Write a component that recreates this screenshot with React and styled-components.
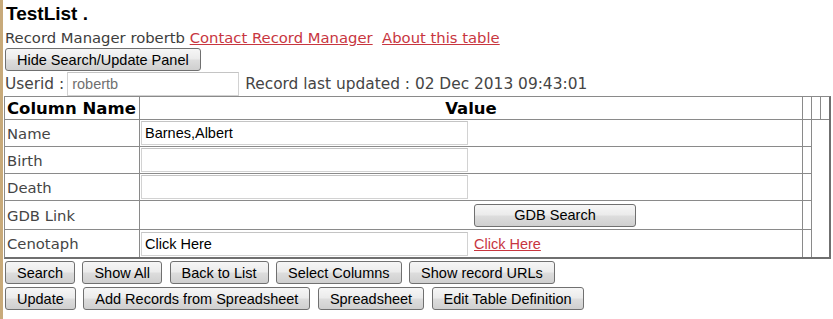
import React from "react";
import styled, { createGlobalStyle } from "styled-components";

const GlobalStyle = createGlobalStyle`
  html, body { margin: 0; padding: 0; background: #fff; }
  body { font-family: "DejaVu Sans", Verdana, sans-serif; }
`;

const LINE = "#8a8a8a";
const EDGE = "#6f6f6f";

const Page = styled.div`
  min-height: 319px;
  box-sizing: border-box;
  border-left: 3px solid #c8aa7a;
  padding-left: 2px;
`;

const Title = styled.h1`
  margin: 0;
  padding: 2px 0 2px 1px;
  font: bold 19px/24px "Liberation Sans", Arial, sans-serif;
  color: #000;
`;

const InfoLine = styled.div`
  font-size: 14.8px;
  line-height: 19px;
  color: #3d3d3d;
  white-space: pre;
`;

const RedLink = styled.a`
  color: #c8363f;
  text-decoration: underline;
  font-family: ${p => (p.$arial ? '"Liberation Sans", Arial, sans-serif' : "inherit")};
  font-size: ${p => (p.$arial ? "14.5px" : "inherit")};
  cursor: pointer;
`;

const Button = styled.button`
  box-sizing: border-box;
  height: 23px;
  width: ${p => (p.$width ? `${p.$width}px` : "auto")};
  padding: 0 11px;
  border: 1px solid #707070;
  border-radius: 3px;
  background: linear-gradient(#f6f6f6, #ebebeb 48%, #dddddd 52%, #cfcfcf);
  font: 14.5px "Liberation Sans", Arial, sans-serif;
  color: #000;
  white-space: nowrap;
`;

const PanelToggle = styled.div`
  margin-top: 1px;
`;

const UserRow = styled.div`
  margin-top: 1px;
  display: flex;
  align-items: center;
  height: 24px;
  font-size: 15.4px;
  color: #454545;
  white-space: pre;
`;

const TextBox = styled.input`
  box-sizing: border-box;
  width: ${p => p.$width}px;
  height: 24px;
  margin: 0;
  padding: 0 0 0 3px;
  border: 1px solid #d2d2d2;
  border-top-color: #c4c4c4;
  font: 14.5px "Liberation Sans", Arial, sans-serif;
  color: ${p => (p.$muted ? "#707070" : "#000")};
  background: #fff;
  outline: none;
`;

const UserBox = styled(TextBox)`
  margin: 0 6px 0 3px;
  padding-left: 4px;
`;

const Grid = styled.table`
  margin-left: -1px;
  width: 827px;
  border-collapse: separate;
  border-spacing: 0;
  table-layout: fixed;
  border-top: 1px solid ${LINE};
  border-left: 1px solid ${LINE};
  border-right: 2px solid ${EDGE};
  border-bottom: 2px solid ${EDGE};
`;

const Row = styled.tr`
  height: ${p => p.$h}px;
`;

const HeadCell = styled.th`
  box-sizing: border-box;
  padding: 0 0 0 ${p => (p.$left ? 2 : 0)}px;
  text-align: ${p => (p.$left ? "left" : "center")};
  font-size: 16.5px;
  font-weight: bold;
  color: #000;
  white-space: nowrap;
  border-bottom: 1px solid ${LINE};
  border-right: ${p => (p.$last ? "none" : `1px solid ${LINE}`)};
`;

const LabelCell = styled.td`
  box-sizing: border-box;
  padding: 0 0 0 2px;
  font-size: 14.8px;
  color: #454545;
  border-right: 1px solid ${LINE};
  border-bottom: ${p => (p.$last ? "none" : `1px solid ${LINE}`)};
`;

const ValueCell = styled(LabelCell)`
  padding-left: 1px;
`;

const EdgeCell = styled.td`
  box-sizing: border-box;
  padding: 0;
  border-right: 1px solid ${LINE};
  border-bottom: ${p => (p.$last ? "none" : `1px solid ${LINE}`)};
`;

const FillCell = styled.td`
  padding: 0;
`;

const ValueLine = styled.div`
  display: grid;
  grid-template-columns: 327px 1fr;
  column-gap: 6px;
  align-items: center;
`;

const ActionBar = styled.div`
  display: flex;
  gap: 7.5px;
  margin-top: ${p => p.$top}px;
`;

const rows = [
  { label: "Name", value: "Barnes,Albert", h: 27 },
  { label: "Birth", value: "", h: 27 },
  { label: "Death", value: "", h: 27 },
  { label: "GDB Link", h: 29, action: "button" },
  { label: "Cenotaph", value: "Click Here", h: 27, action: "link" },
];

export default function App() {
  return (
    <>
      <GlobalStyle />
      <Page>
        <Title>TestList .</Title>
        <InfoLine>
          Record Manager robertb <RedLink>Contact Record Manager</RedLink>{"  "}
          <RedLink>About this table</RedLink>
        </InfoLine>
        <PanelToggle>
          <Button>Hide Search/Update Panel</Button>
        </PanelToggle>
        <UserRow>
          Userid :
          <UserBox $width={172} $muted defaultValue="robertb" />
          Record last updated : 02 Dec 2013 09:43:01
        </UserRow>
        <Grid>
          <colgroup>
            <col style={{ width: 135 }} />
            <col style={{ width: 663 }} />
            <col style={{ width: 9 }} />
            <col style={{ width: 9 }} />
            <col style={{ width: 8 }} />
          </colgroup>
          <tbody>
            <Row $h={23}>
              <HeadCell $left>Column Name</HeadCell>
              <HeadCell>Value</HeadCell>
              <HeadCell />
              <HeadCell />
              <HeadCell $last />
            </Row>
            {rows.map((r, i) => {
              const last = i === rows.length - 1;
              return (
                <Row key={r.label} $h={r.h}>
                  <LabelCell $last={last}>{r.label}</LabelCell>
                  <ValueCell $last={last}>
                    <ValueLine>
                      {r.value !== undefined ? (
                        <TextBox $width={327} defaultValue={r.value} />
                      ) : (
                        <span />
                      )}
                      {r.action === "button" && <Button $width={162}>GDB Search</Button>}
                      {r.action === "link" && <RedLink $arial>Click Here</RedLink>}
                    </ValueLine>
                  </ValueCell>
                  <EdgeCell $last={last} />
                  {i === 0 && <FillCell colSpan={2} rowSpan={rows.length} />}
                </Row>
              );
            })}
          </tbody>
        </Grid>
        <ActionBar $top={2}>
          <Button>Search</Button>
          <Button>Show All</Button>
          <Button>Back to List</Button>
          <Button>Select Columns</Button>
          <Button>Show record URLs</Button>
        </ActionBar>
        <ActionBar $top={3}>
          <Button>Update</Button>
          <Button>Add Records from Spreadsheet</Button>
          <Button>Spreadsheet</Button>
          <Button>Edit Table Definition</Button>
        </ActionBar>
      </Page>
    </>
  );
}
